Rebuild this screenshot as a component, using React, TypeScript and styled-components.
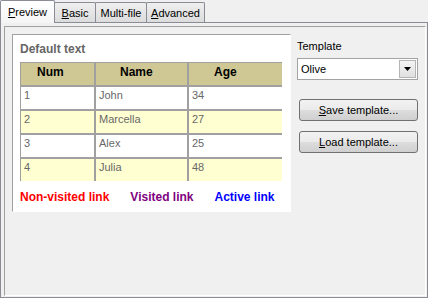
import styled, { createGlobalStyle } from "styled-components";

const GlobalStyle = createGlobalStyle`
  html, body {
    margin: 0;
    padding: 0;
    background: #f0f0f0;
  }
  body {
    font-family: "Liberation Sans", Arial, sans-serif;
    font-size: 11px;
    color: #000;
  }
`;

const Window = styled.div`
  width: 428px;
  height: 298px;
  display: flex;
  flex-direction: column;
  background: #f0f0f0;
`;

const TabBar = styled.div`
  display: flex;
  align-items: flex-end;
  height: 22px;
`;

const Tab = styled.div<{ $w: number; $active?: boolean }>`
  position: relative;
  z-index: ${(p) => (p.$active ? 2 : 1)};
  box-sizing: border-box;
  width: ${(p) => p.$w}px;
  height: ${(p) => (p.$active ? 23 : 20)}px;
  margin-bottom: ${(p) => (p.$active ? -1 : 0)}px;
  margin-left: -1px;
  padding-top: ${(p) => (p.$active ? 0 : 1)}px;
  border: 1px solid #898c95;
  border-bottom: none;
  border-radius: 2px 2px 0 0;
  display: flex;
  align-items: center;
  justify-content: center;
  background: ${(p) =>
    p.$active
      ? "linear-gradient(#ffffff, #f4f4f4)"
      : "linear-gradient(#efefef, #dcdcdc)"};
  white-space: nowrap;

  &:first-child {
    margin-left: 0;
  }
`;

const Panel = styled.div`
  flex: 1;
  display: flex;
  box-sizing: border-box;
  border: 1px solid #898c95;
  padding: 3px 1px 1px 3px;
`;

const Inner = styled.div`
  flex: 1;
  display: flex;
  align-items: flex-start;
  gap: 6px;
  padding: 7px;
  border-top: 1px solid #a0a0a0;
  border-left: 1px solid #a0a0a0;
  border-right: 1px solid #fff;
  border-bottom: 1px solid #fff;
`;

const PreviewBox = styled.div`
  box-sizing: border-box;
  width: 279px;
  height: 178px;
  padding: 0 7px;
  display: flex;
  flex-direction: column;
  background: #fff;
  border-top: 1px solid #a0a0a0;
  border-left: 1px solid #a0a0a0;
  border-right: 1px solid #fff;
  border-bottom: 1px solid #fff;
`;

const Heading = styled.div`
  margin-top: 7px;
  font-size: 12px;
  font-weight: bold;
  line-height: 14px;
  color: #666;
`;

const TableClip = styled.div`
  margin-top: 6px;
  width: 262px;
  height: 119px;
  overflow: hidden;
`;

const Grid = styled.div`
  display: grid;
  grid-template-columns: 75px 93px 120px;
  grid-auto-rows: 24px;
  width: 288px;
`;

const HeadCell = styled.div<{ $indent: number }>`
  box-sizing: border-box;
  border: 1px solid #a0a0a0;
  background: #cfc894;
  padding: 2px 0 0 ${(p) => p.$indent}px;
  font-size: 12px;
  font-weight: bold;
  line-height: 14px;
  color: #000;
`;

const Cell = styled.div<{ $alt?: boolean }>`
  box-sizing: border-box;
  border: 1px solid #a0a0a0;
  background: ${(p) => (p.$alt ? "#ffffd2" : "#fff")};
  padding: 1px 3px 0;
  font-size: 11px;
  line-height: 14px;
  color: #686868;
`;

const Links = styled.div`
  display: flex;
  gap: 21px;
  margin-top: 9px;
  font-size: 12px;
  font-weight: bold;
  line-height: 14px;
`;

const LinkText = styled.span<{ $color: string }>`
  color: ${(p) => p.$color};
`;

const Side = styled.div`
  width: 121px;
  display: flex;
  flex-direction: column;
`;

const Label = styled.div`
  margin-top: 6px;
  line-height: 13px;
`;

const Combo = styled.div`
  box-sizing: border-box;
  margin-top: 5px;
  height: 22px;
  display: flex;
  align-items: center;
  padding-left: 3px;
  background: #fff;
  border: 1px solid #a3a3a3;
`;

const ComboText = styled.span`
  flex: 1;
`;

const DropButton = styled.div`
  box-sizing: border-box;
  width: 17px;
  height: 18px;
  margin-right: 1px;
  display: flex;
  align-items: center;
  justify-content: center;
  border: 1px solid #b5b5b5;
  background: linear-gradient(#f4f4f4, #e0e0e0);
`;

const Button = styled.button<{ $gap: number }>`
  box-sizing: border-box;
  margin: ${(p) => p.$gap}px 0 0 2px;
  width: 119px;
  height: 22px;
  padding: 0;
  font-family: inherit;
  font-size: 11px;
  color: #000;
  border: 1px solid #707070;
  border-radius: 3px;
  background: linear-gradient(#f2f2f2 0%, #ebebeb 48%, #dddddd 52%, #cfcfcf 100%);
`;

const rows = [
  ["1", "John", "34"],
  ["2", "Marcella", "27"],
  ["3", "Alex", "25"],
  ["4", "Julia", "48"],
];

export default function App() {
  return (
    <>
      <GlobalStyle />
      <Window>
        <TabBar>
          <Tab $w={55} $active>
            <span>
              <u>P</u>review
            </span>
          </Tab>
          <Tab $w={42}>
            <span>
              <u>B</u>asic
            </span>
          </Tab>
          <Tab $w={52}>Multi-file</Tab>
          <Tab $w={59}>
            <span>
              <u>A</u>dvanced
            </span>
          </Tab>
        </TabBar>
        <Panel>
          <Inner>
            <PreviewBox>
              <Heading>Default text</Heading>
              <TableClip>
                <Grid>
                  <HeadCell $indent={16}>Num</HeadCell>
                  <HeadCell $indent={24}>Name</HeadCell>
                  <HeadCell $indent={25}>Age</HeadCell>
                  {rows.map((r, i) =>
                    r.map((v, j) => (
                      <Cell key={`${i}-${j}`} $alt={i % 2 === 1}>
                        {v}
                      </Cell>
                    ))
                  )}
                </Grid>
              </TableClip>
              <Links>
                <LinkText $color="#ff0000">Non-visited link</LinkText>
                <LinkText $color="#800080">Visited link</LinkText>
                <LinkText $color="#0000ff">Active link</LinkText>
              </Links>
            </PreviewBox>
            <Side>
              <Label>Template</Label>
              <Combo>
                <ComboText>Olive</ComboText>
                <DropButton>
                  <svg width="7" height="4" viewBox="0 0 7 4">
                    <path d="M0 0h7L3.5 4z" fill="#000" />
                  </svg>
                </DropButton>
              </Combo>
              <Button $gap={19}>
                <u>S</u>ave template...
              </Button>
              <Button $gap={10}>
                <u>L</u>oad template...
              </Button>
            </Side>
          </Inner>
        </Panel>
      </Window>
    </>
  );
}
